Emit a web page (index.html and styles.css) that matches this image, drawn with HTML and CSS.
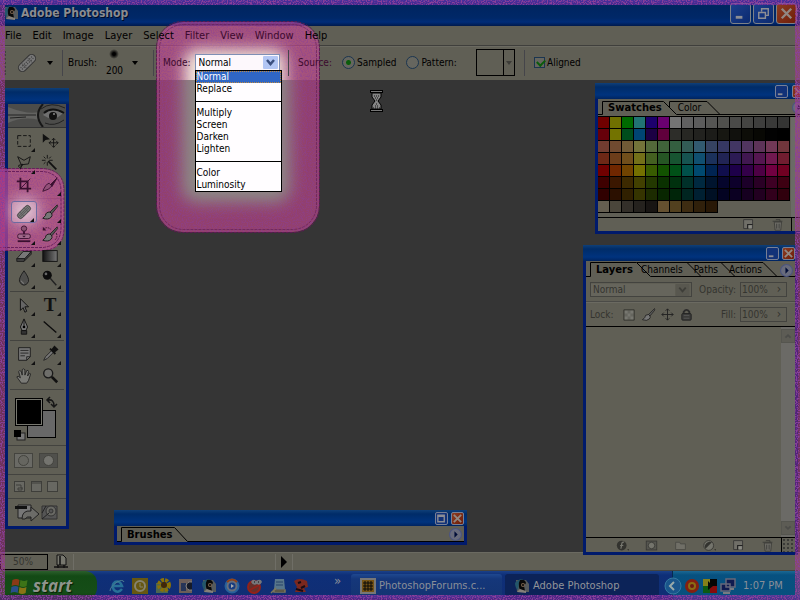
FILE: index.html
```
<!DOCTYPE html>
<html lang="en">
<head>
<meta charset="utf-8">
<title>Adobe Photoshop</title>
<link rel="stylesheet" href="styles.css">
</head>
<body>
<svg class="defs" aria-hidden="true">
  <defs>
    <filter id="grain" x="0" y="0" width="100%" height="100%">
      <feTurbulence type="fractalNoise" baseFrequency="0.8" numOctaves="2" seed="4" result="n"/>
      <feColorMatrix in="n" type="matrix" values="0 0 0 0 0.25  0 0 0 0 0.05  0 0 0 0 0.32  5 0 0 0 -2.2" result="c"/>
      <feComposite in="c" in2="SourceGraphic" operator="in"/>
    </filter>
    <filter id="soft" x="-50%" y="-50%" width="200%" height="200%"><feGaussianBlur stdDeviation="8"/></filter>
    <symbol id="eye" viewBox="0 0 16 16"><path d="M2 2h10l3 4v8H3z" fill="#565a5c"/><path d="M1 5q3-4 8-4l-4 5-1 6q-3-2-3-7z" fill="#23566a"/><path d="M6 2q5-1 6 3l-2 3 1 5q-5 1-6-4-1-4 1-7z" fill="#080808"/><circle cx="9" cy="7" r="2" fill="#79634f"/><circle cx="9" cy="7" r="1" fill="#050505"/><path d="M3 14l3-3 6 2v2z" fill="#85807a"/></symbol>
    <symbol id="bandage" viewBox="0 0 24 24"><g transform="rotate(-45 12 12)"><rect x="1.500" y="8" width="21" height="8" rx="4" fill="#777" stroke="#333"/><path d="M8 8v8M16 8v8" stroke="#444" stroke-width=".7"/><path d="M4 11h16M4 13h16" stroke="#333" stroke-dasharray="1 1.500"/></g></symbol>
    <symbol id="brush" viewBox="0 0 20 20"><path d="M18 2 10 10l2 2 6.500-8z" fill="#555" stroke="#161616" stroke-width=".8"/><path d="M10 10q-5 0-5 4l-3 3q6 2 9-1 2-2 1-4z" fill="#777" stroke="#161616"/></symbol>
    <symbol id="page" viewBox="0 0 16 16"><path d="M2 2h11v11H2z" fill="#706f68" stroke="#333"/><path d="M7 13V8h6" fill="none" stroke="#222" stroke-width="1.500"/><path d="M8 9h4v4H8z" fill="#8a8a84"/></symbol>
    <symbol id="trash" viewBox="0 0 16 16"><path d="M4 5h9l-1 10H5z" fill="#6b6a64" stroke="#3b3b38"/><path d="M2 4h12M6 2h5v2M7 7v6M10 7v6" fill="none" stroke="#383835"/></symbol>
    <symbol id="min" viewBox="0 0 12 12"><path d="M2 9h5" stroke="#8c8d94" stroke-width="2"/></symbol>
    <symbol id="close" viewBox="0 0 12 12"><path d="M2 2l8 8M10 2l-8 8" stroke="#918782" stroke-width="2"/></symbol>
    <symbol id="play" viewBox="0 0 12 12"><circle cx="6" cy="6" r="5.500" fill="#686b7c" stroke="#4b5480"/><path d="M5 3l3 3-3 3z" fill="#000d38"/></symbol>
  </defs>
</svg>

<header class="titlebar">
  <svg class="i16"><use href="#eye"/></svg>
  <h1>Adobe Photoshop</h1>
  <button class="cap" aria-label="Minimize"><svg viewBox="0 0 20 20"><path d="M5 14h7" stroke="#8c8d94" stroke-width="3"/></svg></button>
  <button class="cap" aria-label="Restore"><svg viewBox="0 0 20 20"><path d="M8 8V5h7v7h-3M5 9h7v6H5zM5 9h7" fill="none" stroke="#8c8d94" stroke-width="1.500"/></svg></button>
  <button class="cap red" aria-label="Close"><svg viewBox="0 0 20 20"><path d="M5 5l10 10M15 5L5 15" stroke="#918782" stroke-width="2.500"/></svg></button>
</header>
<nav class="menubar">
  <a href="#">File</a><a href="#">Edit</a><a href="#">Image</a><a href="#">Layer</a><a href="#">Select</a><a href="#" class="lit">Filter</a><a href="#" class="lit">View</a><a href="#" class="lit">Window</a><a href="#">Help</a>
</nav>
<section class="options">
  <div class="cell tool"><i class="grip"></i><svg class="i24"><use href="#bandage"/></svg><i class="caret"></i></div>
  <div class="cell brushcell"><span>Brush:</span><span class="tip"><i class="dot"></i>200</span><i class="caret"></i></div>
  <div class="cell modecell"><label for="mode" class="lit">Mode:</label>
    <div class="combo">
      <select id="mode"><option>Normal</option></select>
      <svg class="chev" viewBox="0 0 15 13"><rect width="15" height="13" rx="1" fill="#b3c6f4"/><path d="M4 4l3.500 4L11 4" fill="none" stroke="#3c5080" stroke-width="2.500"/></svg>
      <ul class="list" role="listbox" aria-label="Mode">
        <li role="option" class="on" aria-selected="true">Normal</li><li role="option">Replace</li><li class="rule" role="separator"></li><li role="option">Multiply</li><li role="option">Screen</li><li role="option">Darken</li><li role="option">Lighten</li><li class="rule" role="separator"></li><li role="option">Color</li><li role="option">Luminosity</li>
      </ul>
    </div>
  </div>
  <div class="cell source"><span class="lit">Source:</span><label><input type="radio" name="src" checked>Sampled</label><label><input type="radio" name="src">Pattern:</label><button class="pattern" aria-label="Pattern picker"><i class="caret"></i></button></div>
  <div class="cell"><label><input type="checkbox" checked>Aligned</label></div>
</section>

<main class="desk">
  <svg class="wait" viewBox="0 0 13 22"><path d="M0 1.500h13M0 20.500h13" stroke="#000" stroke-width="3"/><path d="M1 1.500h11M1 20.500h11" stroke="#777"/><path d="M2 3h9v4l-3 4 3 4v4H2v-4l3-4-3-4z" fill="#858585" stroke="#000"/><path d="M4 6h5M5 8h3M6 10h1M6 14h1M5 16h3M3 18h7" stroke="#111" stroke-dasharray="1 1"/></svg>

  <section class="win toolbox" aria-label="Tools">
    <div class="wt"></div>
    <svg class="banner" viewBox="0 0 58 23" preserveAspectRatio="none"><rect width="58" height="23" fill="#4c4c4a"/><path d="M0 3q20 8 31 5v8Q15 12 0 19z" fill="#626260"/><path d="M0 11h28M2 14l16-1" stroke="#222" fill="none"/><path d="M35 0q-10 11 0 23" stroke="#171717" fill="none" stroke-width="2"/><path d="M35 11q8-9 20-2-9 10-20 2z" fill="#707070"/><path d="M36 9q8-7 20 0" stroke="#111" stroke-width="2" fill="none"/><circle cx="45" cy="12" r="4" fill="#101010"/><circle cx="46" cy="10" r="1" fill="#888"/><path d="M33 5q10-8 24-1M37 19q9 4 19-3" stroke="#222" fill="none"/></svg>
    <div class="tools">
      <button aria-label="Marquee"><svg viewBox="0 0 20 20"><rect x="3" y="4" width="14" height="12" fill="none" stroke="#111" stroke-dasharray="4 2"/></svg></button>
      <button class="solo" aria-label="Move"><svg viewBox="0 0 20 20"><path d="M2 2v10l3-3 5-1z" fill="#111"/><path d="M14 7v10M9 12h10M12 9l2-2 2 2M12 15l2 2 2-2M11 10l-2 2 2 2M17 10l2 2-2 2" fill="none" stroke="#111"/></svg></button>
      <button aria-label="Lasso"><svg viewBox="0 0 20 20"><path d="M7 12L3 3l7 4 7-4-2 8-8 1q-4 0-3 2t3 0 1-3l-2 6" fill="none" stroke="#111"/></svg></button>
      <button class="solo" aria-label="Magic wand"><svg viewBox="0 0 20 20"><path d="M8 8l9 9" stroke="#111" stroke-width="2"/><path d="M7 1v4M7 9v4M1 7h4M9 7h4M3 3l2 2M11 3L9 5M3 11l2-2" stroke="#111"/></svg></button>
      <button class="solo" aria-label="Crop"><svg viewBox="0 0 20 20"><path d="M6 2v12h12M2 6h12v12" fill="none" stroke="#3a1030" stroke-width="2"/><path d="M5 15L17 3" stroke="#3a1030"/></svg></button>
      <button aria-label="Slice"><svg viewBox="0 0 20 20"><path d="M18 2l-8 8 2 2z" fill="#3a1030" stroke="#3a1030"/><path d="M2 17Q5 9 9 8l3 3q-2 4-10 6z" fill="#925078" stroke="#3a1030"/></svg></button>
    </div>
    <div class="tools">
      <button class="active" aria-label="Healing brush"><svg viewBox="0 0 24 24"><use href="#bandage"/></svg></button>
      <button aria-label="Brush"><svg><use href="#brush"/></svg></button>
      <button aria-label="Clone stamp"><svg viewBox="0 0 20 20"><circle cx="10" cy="4" r="3" fill="#8a5273" stroke="#3a1030"/><path d="M9 7h2v4H9z" fill="#3a1030"/><rect x="3" y="10" width="14" height="5" rx="2" fill="#a0688a" stroke="#3a1030"/><path d="M8 12h4l-2 2z" fill="#3a1030"/><path d="M3 18h14" stroke="#3a1030" stroke-width="2"/></svg></button>
      <button aria-label="History brush"><svg viewBox="0 0 20 20"><use href="#brush"/><path d="M2 5q5-4 9 0M17 9q2 5-2 8" fill="none" stroke="#3a1030" stroke-dasharray="2 1"/><path d="M2 2v4h4z" fill="#3a1030"/></svg></button>
      <button aria-label="Eraser"><svg viewBox="0 0 20 20"><path d="M2 13l7-8h9l-7 8z" fill="#777" stroke="#1a1a1a"/><path d="M2 13v3h8l8-8V5l-7 8H2M11 13l-1 3" fill="#444" stroke="#1a1a1a"/></svg></button>
      <button aria-label="Gradient"><svg viewBox="0 0 20 20"><linearGradient id="gr"><stop stop-color="#111"/><stop offset="1" stop-color="#777"/></linearGradient><rect x="2" y="4" width="16" height="12" fill="url(#gr)" stroke="#111"/></svg></button>
      <button aria-label="Blur"><svg viewBox="0 0 20 20"><path d="M10 2q6 8 5 12-2 4-5 4t-5-4q-1-4 5-12z" fill="#4e4e4c" stroke="#1b1b1b"/><path d="M7 13q1 3 3 3" stroke="#888" fill="none"/></svg></button>
      <button aria-label="Dodge"><svg viewBox="0 0 20 20"><circle cx="7" cy="7" r="5" fill="#0c0c0c"/><circle cx="5.500" cy="5.500" r="1.500" fill="#666"/><path d="M10 10l7 8" stroke="#222" stroke-width="1.500"/></svg></button>
    </div>
    <div class="tools">
      <button aria-label="Path selection"><svg viewBox="0 0 20 20"><path d="M6 3v13l3-3 2 5 2-1-2-5h4z" fill="#666" stroke="#0c0c0c"/></svg></button>
      <button aria-label="Type" class="type">T</button>
      <button aria-label="Pen"><svg viewBox="0 0 20 20"><path d="M10 1l4 9-2 4H8l-2-4z" fill="#777" stroke="#111"/><path d="M10 2v8M7 14h6v4H7z" stroke="#111" fill="#333"/><circle cx="10" cy="10" r="1.500"/></svg></button>
      <button aria-label="Line"><svg viewBox="0 0 20 20"><path d="M3 4l14 12" stroke="#0c0c0c" stroke-width="1.500"/></svg></button>
    </div>
    <div class="tools">
      <button aria-label="Notes"><svg viewBox="0 0 20 20"><path d="M4 3h13v10l-4 4H4z" fill="#777" stroke="#1b1b1b"/><path d="M6 6h9M6 9h9M6 12h5M13 17v-4h4" fill="none" stroke="#222"/></svg></button>
      <button aria-label="Eyedropper"><svg viewBox="0 0 20 20"><path d="M3 17l2-4 7-7 2 2-7 7z" fill="#777" stroke="#222"/><path d="M10 4l6 6M12 6l3-4 3 3-4 3z" fill="#111" stroke="#111" stroke-width="2"/></svg></button>
      <button class="solo" aria-label="Hand"><svg viewBox="0 0 20 20"><path d="M7 18l-5-7q1-2 4 1L4 5q1-2 3 0l1 4V3q1-2 3 0v6l2-5q2-1 2 1l-1 5 2-3q2 0 1 2l-2 6-2 3z" fill="#7a7a76" stroke="#222"/></svg></button>
      <button class="solo" aria-label="Zoom"><svg viewBox="0 0 20 20"><circle cx="8" cy="7" r="5" fill="#6e6e6a" stroke="#1a1a1a" stroke-width="1.500"/><path d="M12 11l6 6" stroke="#111" stroke-width="3"/></svg></button>
    </div>
    <svg class="colors" viewBox="0 0 58 55"><rect x="19.500" y="20.500" width="28" height="27" fill="#686868" stroke="#000"/><rect x="7" y="8" width="28" height="28" fill="#000"/><rect x="8.500" y="9.500" width="25" height="25" fill="#000" stroke="#77776f"/><rect x="9" y="43" width="8" height="7" fill="#777" stroke="#222"/><rect x="6" y="40" width="7" height="7" fill="#000"/><path d="M40 10q6-1 6 6M42 7l-3 3 3 3M43 14l3 3 3-3" fill="none" stroke="#171717" stroke-width="1.500"/></svg>
    <svg class="mask" viewBox="0 0 58 28"><g stroke="#44443f"><rect x="6.500" y="7.500" width="18" height="14" fill="#6a6a65"/><circle cx="15.500" cy="14.500" r="5" fill="#666660"/><rect x="31.500" y="7.500" width="18" height="14" fill="#50504c"/><circle cx="40.500" cy="14.500" r="5" fill="#74746f"/></g></svg>
    <svg class="screen" viewBox="0 0 58 23"><g stroke="#3e3e3a" fill="#686862"><rect x="6.500" y="6.500" width="10" height="10"/><rect x="23.500" y="6.500" width="10" height="10"/><rect x="39.500" y="6.500" width="10" height="10"/><path d="M8 10h5v3h2M10 13h4v2h-4zM24 8h9" fill="none"/></g></svg>
    <svg class="jump" viewBox="0 0 58 27"><path d="M10 6h13v13H10z" fill="#777" stroke="#222"/><path d="M7 7h12v3H7z" fill="#111"/><path d="M14 20q0-9 9-8V8l8 7-8 7v-4q-4-1-6 2z" fill="#6c6c68" stroke="#222"/><path d="M34 7h15v13H34z" fill="#555" stroke="#333"/><circle cx="43" cy="12" r="5" fill="#696964" stroke="#333"/><circle cx="43" cy="12" r="2" fill="#555" stroke="#333"/><path d="M34 20l7-6M38 7l-4 7" stroke="#222"/></svg>
  </section>

  <section class="win swatches" aria-label="Swatches">
    <div class="wt"><button class="wb" aria-label="Minimize"><svg><use href="#min"/></svg></button><button class="wb red" aria-label="Close"><svg><use href="#close"/></svg></button></div>
    <div class="tabs"><svg class="edge" viewBox="0 0 207 18" preserveAspectRatio="xMinYMin slice"><path d="M0 15.500h4.500V2.500h61l13 13H207M71.500 8V2.500H109l13 13" fill="none" stroke="#000"/></svg><b>Swatches</b><span>Color</span><svg class="play"><use href="#play"/></svg></div>
    <div class="swbody"><div class="grid" id="grid"></div><div class="bar"></div></div>
    <div class="wfoot"><svg class="i16"><use href="#page"/></svg><svg class="i16"><use href="#trash"/></svg><i></i></div>
  </section>

  <section class="win layers" aria-label="Layers">
    <div class="wt"><button class="wb" aria-label="Minimize"><svg><use href="#min"/></svg></button><button class="wb red" aria-label="Close"><svg><use href="#close"/></svg></button></div>
    <div class="tabs"><svg class="edge" viewBox="0 0 209 18" preserveAspectRatio="xMinYMin slice"><path d="M0 15.500h4.500V1.500h46l14 14H209M51 1.500h50l14 14M101 1.500h34l14 14M135 1.500h42l14 14" fill="none" stroke="#000"/></svg><b>Layers</b><span>Channels</span><span>Paths</span><span>Actions</span><svg class="play"><use href="#play"/></svg></div>
    <div class="row dim"><div class="blendbox"><select class="blend" aria-label="Blend mode" disabled><option>Normal</option></select><svg viewBox="0 0 15 13"><rect width="15" height="13" rx="1" fill="#58574f"/><path d="M4 4l3.500 4L11 4" fill="none" stroke="#3e3e39" stroke-width="2"/></svg></div><label class="end" for="op">Opacity:</label><input id="op" class="pct" value="100%" disabled><i class="step">›</i></div>
    <div class="row dim second"><span>Lock:</span><svg class="i16 first" viewBox="0 0 16 16"><path d="M2 3h11v11H2z" fill="#66665f" stroke="#33332f"/><path d="M3 4h3v3H3zM9 4h3v3H9zM6 7h3v3H6zM3 10h3v3H3zM9 10h3v3H9z" fill="#777770"/></svg><svg class="i16"><use href="#brush"/></svg><svg class="i16" viewBox="0 0 16 16"><path d="M8 2v12M2 8h12M6 4l2-2 2 2M6 12l2 2 2-2M4 6L2 8l2 2M12 6l2 2-2 2" fill="none" stroke="#222"/></svg><svg class="i16" viewBox="0 0 16 16"><path d="M5 8V5q3-4 6 0v3" fill="none" stroke="#2b2b2b" stroke-width="2"/><rect x="3" y="7" width="10" height="7" rx="1" fill="#3b3b39" stroke="#222"/><path d="M5 9h6M5 12h6" stroke="#555"/></svg><label class="end" for="fill">Fill:</label><input id="fill" class="pct" value="100%" disabled><i class="step">›</i></div>
    <div class="lbody"><div class="scroll"><svg viewBox="0 0 14 14"><path d="M4 9l3-3 3 3" fill="none" stroke="#4c4c49" stroke-width="2"/></svg><svg viewBox="0 0 14 14"><path d="M4 5l3 3 3-3" fill="none" stroke="#4c4c49" stroke-width="2"/></svg></div></div>
    <div class="wfoot lfoot">
      <svg class="i16" viewBox="0 0 16 16"><circle cx="7" cy="8" r="6" fill="#33332f"/><path d="M10 4q-3-1-3 3l-1 5M5 8h4" fill="none" stroke="#77776f" stroke-width="1.500"/><path d="M14 13h2l-1 1z"/></svg>
      <svg class="i16" viewBox="0 0 16 16"><rect x="1.500" y="2.500" width="13" height="11" fill="#55554f" stroke="#363633"/><circle cx="8" cy="8" r="4" fill="#74746c" stroke="#363633"/></svg>
      <svg class="i16" viewBox="0 0 16 16"><path d="M2 4h5l1 2h6v7H2z" fill="#706f67" stroke="#484842"/></svg>
      <svg class="i16" viewBox="0 0 16 16"><circle cx="7" cy="8" r="6" fill="#74746c" stroke="#33332f"/><path d="M3 12a6 6 0 0 1 8-8z" fill="#33332f"/><path d="M14 13h2l-1 1z"/></svg>
      <svg class="i16"><use href="#page"/></svg><svg class="i16"><use href="#trash"/></svg><i></i>
    </div>
  </section>

  <section class="win brushes" aria-label="Brushes">
    <div class="wt"><button class="wb" aria-label="Maximize"><svg viewBox="0 0 12 12"><path d="M2 2.500h7v7H2zM2 3.500h7" fill="none" stroke="#8c8d94" stroke-width="1.500"/></svg></button><button class="wb red" aria-label="Close"><svg><use href="#close"/></svg></button></div>
    <div class="tabs"><svg class="edge" viewBox="0 0 347 18" preserveAspectRatio="xMinYMin slice"><path d="M0 15.500h4.500V1.500h53l13 14H347" fill="none" stroke="#000"/></svg><b>Brushes</b><svg class="play"><use href="#play"/></svg></div>
  </section>
</main>

<footer class="status"><input class="zoom" value="50%" aria-label="Zoom"><svg class="i16" viewBox="0 0 16 16"><path d="M4 1h6l3 3v7H4z" fill="#77776e" stroke="#111"/><path d="M7 2v9M1 13h14M5 11v3M11 11v3" stroke="#111" stroke-width="1.500"/></svg><span class="info"></span><button class="go" aria-label="Status menu"></button></footer>

<footer class="taskbar">
  <button class="start"><svg viewBox="0 0 20 20"><g transform="skewX(-8)"><path d="M4 4q4-2 7 0v6q-3-2-7 0z" fill="#8a3a18"/><path d="M12 4q4 2 7 0v6q-3 2-7 0z" fill="#3d7417"/><path d="M4 11q4-2 7 0v6q-3-2-7 0z" fill="#294f8c"/><path d="M12 11q4 2 7 0v6q-3 2-7 0z" fill="#8a7415"/></g></svg>start</button>
  <div class="quick">
    <svg viewBox="0 0 16 16"><path d="M13 11q-4 5-8 1-3-5 1-8 5-2 7 4H5" fill="none" stroke="#287097" stroke-width="2.500"/><path d="M1 13q0-4 7-9 6-3 7 0" fill="none" stroke="#4b7d91"/></svg>
    <svg viewBox="0 0 16 16"><rect width="16" height="16" fill="#665711"/><circle cx="8" cy="8" r="5" fill="none" stroke="#85836f" stroke-width="2"/><path d="M8 5v4h3" fill="none" stroke="#85836f"/></svg>
    <svg viewBox="0 0 16 16"><path d="M1 5h12v10H1z" fill="#4d6651"/><circle cx="9" cy="7" r="5" fill="none" stroke="#8a7207" stroke-width="4" stroke-dasharray="3 1"/><circle cx="9" cy="7" r="3" fill="#422807"/></svg>
    <svg viewBox="0 0 16 16"><path d="M1 1h13v14H1z" fill="#6b5d58"/><path d="M3 5h5v8H3z" fill="#253458"/><path d="M14 4q-5-1-6 4 1 5 6 4" fill="#151a28" stroke="#8a8784"/></svg>
    <svg><use href="#eye"/></svg>
    <svg viewBox="0 0 16 16"><circle cx="8" cy="8" r="6.500" fill="#696e7a" stroke="#28609a" stroke-width="2"/><path d="M3 4q5-5 10 0" stroke="#954014" fill="none" stroke-width="2"/><circle cx="8" cy="8" r="3.500" fill="#183c80"/><path d="M7 6l3 2-3 2z" fill="#aaa"/></svg>
    <svg viewBox="0 0 16 16"><circle cx="7" cy="9" r="6" fill="#65302a" stroke="#922219" stroke-width="2"/><path d="M3 12l9-5" stroke="#922219" stroke-width="2"/><path d="M4 4q2-4 5-1 5-3 6 1-2 4-5 2-4 2-6-2z" fill="#76777a"/><path d="M7 4h1M11 4h1" stroke="#111"/></svg>
    <svg viewBox="0 0 16 16"><path d="M5 1h9l1 10H4z" fill="#58758a"/><path d="M6 4h7M6 7h7" stroke="#264368"/><path d="M1 15l5-5M4 12h11v2H4z" stroke="#7b755d" stroke-width="1.500"/></svg>
    <svg viewBox="0 0 16 16"><path d="M1 3q5-4 13 0l1 6-4 1 2 4H2l2-5z" fill="#7b281e"/><path d="M5 5l3-1M8 10l4-2M3 11l7 2" stroke="#170b14" stroke-width="2"/></svg>
  </div>
  <span class="more">»</span>
  <button class="task"><svg viewBox="0 0 16 16"><rect x="1" y="1" width="14" height="14" fill="#765315" stroke="#777" stroke-width="2"/><path d="M5 3v10M8 3v10M11 3v10M3 5h10M3 8h10M3 11h10" stroke="#0a0a0a"/></svg><span>PhotoshopForums.c...</span></button>
  <button class="task down"><svg><use href="#eye"/></svg><span>Adobe Photoshop</span></button>
  <div class="tray"><svg class="i18" viewBox="0 0 18 18"><circle cx="9" cy="9" r="8" fill="#19558b" stroke="#3479a0"/><path d="M10 5L6 9l4 4" fill="none" stroke="#9aa" stroke-width="2"/></svg>
    <svg viewBox="0 0 16 16"><circle cx="8" cy="8" r="7" fill="#852010"/><circle cx="8" cy="8" r="4" fill="#8a6c14"/><circle cx="8" cy="8" r="2" fill="#6c1b10"/></svg>
    <svg viewBox="0 0 16 16"><path d="M1 1h7v7H1z" fill="#85801a"/><path d="M8 1h7v7H8z" fill="#050505"/><path d="M1 8h7v7H1z" fill="#0c5a13"/><path d="M8 8h7v7H8z" fill="#870b0b"/><path d="M6 3l5 5-5 4z" fill="#080808"/></svg>
    <svg viewBox="0 0 16 16"><path d="M6 1h9v8H6zM1 6h9v7H1z" fill="#101b50" stroke="#65687a" stroke-width="1.500"/><path d="M3 15h7M10 11h4" stroke="#777a82" stroke-width="2"/></svg>
    <time>1:07 PM</time></div>
</footer>

<svg class="spot modespot" viewBox="0 0 166 214" aria-hidden="true">
  <clipPath id="bars"><rect width="166" height="60"/></clipPath><clipPath id="below"><rect y="60" width="166" height="154"/></clipPath>
  <rect x="2" y="2" width="162" height="210" rx="26" fill="#de4a9a" fill-opacity=".56"/>
  <rect x="2" y="2" width="162" height="210" rx="26" fill="#fff" filter="url(#grain)" opacity=".45"/>
  <g fill="none" stroke="#5d1a52" stroke-dasharray="3 1"><rect x="1.500" y="1.500" width="163" height="211" rx="26"/><rect x="4.500" y="4.500" width="157" height="205" rx="24" stroke-opacity=".6"/></g>
  <rect x="27" y="28" width="108" height="154" rx="14" fill="#8c8985" filter="url(#soft)" clip-path="url(#below)"/>
  <rect x="30" y="30" width="100" height="80" rx="10" fill="#f4ecde" filter="url(#soft)" clip-path="url(#bars)"/>
</svg>
<svg class="spot toolspot" viewBox="0 0 68 86" aria-hidden="true">
  <path d="M0 2h44q20 2 20 22v38q0 20-20 22H0z" fill="#e0529f" fill-opacity=".6"/>
  <path d="M0 2h44q20 2 20 22v38q0 20-20 22H0z" fill="#fff" filter="url(#grain)" opacity=".35"/>
  <path d="M0 1.500h44q20 2 20 22v38q0 20-20 22H0M0 4.500h43q18 2 18 20v36q0 18-18 20H0" fill="none" stroke="#6a1f5c" stroke-dasharray="3 1"/>
  <rect x="12" y="32" width="26" height="24" rx="8" fill="#ead7e2" filter="url(#soft)" opacity=".8"/>
</svg>
<div class="frame" aria-hidden="true"><svg class="t"><rect width="100%" height="100%" filter="url(#grain)"/></svg><svg class="b"><rect width="100%" height="100%" filter="url(#grain)"/></svg><svg class="l"><rect width="100%" height="100%" filter="url(#grain)"/></svg><svg class="r"><rect width="100%" height="100%" filter="url(#grain)"/></svg></div>
<script src="swatches.js"></script>
</body>
</html>
```
FILE: styles.css
```
* { box-sizing: border-box; }
body {
  margin: 0; height: 100vh; display: flex; flex-direction: column; overflow: hidden; position: relative;
  background: #353535; color: #000;
  font: 10px/12px "DejaVu Sans Condensed", "DejaVu Sans", sans-serif;
}
button, input, select { font: inherit; color: inherit; margin: 0; padding: 0; border: 0; background: none; border-radius: 0; }
svg { display: block; flex: none; }
.defs { position: absolute; width: 0; height: 0; }
.i16 { width: 16px; height: 16px; }
.i18 { width: 18px; height: 18px; }
.i24 { width: 24px; height: 24px; }
a { color: inherit; text-decoration: none; }
.lit { color: #3c0a2e; }

.titlebar {
  flex: none; height: 26px; padding: 0 3px; display: flex; align-items: center; gap: 2px;
  background: linear-gradient(#003a88, #002560 6px, #002868 18px, #002c78 22px, #001a4c);
}
.titlebar h1 { flex: 1; margin: 0; font: bold 12px/16px "DejaVu Sans Condensed", sans-serif; color: #8b8c90; text-shadow: 1px 1px #000c28; }
.cap { width: 21px; height: 21px; border: 1px solid #7d8188; border-radius: 3px; background: linear-gradient(135deg, #1c3f8c, #0b2a70); }
.cap svg { width: 19px; height: 19px; }
.cap.red, .wb.red { background: linear-gradient(135deg, #8c3c22, #6e1d08); }

.menubar {
  flex: none; height: 20px; padding: 0 5px; display: flex; align-items: center; gap: 11px; font-size: 11px;
  background: #605f55; border-bottom: 1px solid #3f3f3c;
}
.menubar a { position: relative; z-index: 3; }
.options { flex: none; height: 34px; padding-bottom: 2px; display: flex; align-items: center; background: #605f55; border-top: 1px solid #6b6a61; }
.cell { position: relative; z-index: 3; height: 26px; display: flex; align-items: center; padding: 0 9px; border-left: 1px solid #45454a; }
.cell.tool { border: 0; width: 62px; padding: 0 0 0 4px; gap: 9px; }
.cell.tool .caret { margin-left: -1px; }
.grip { width: 2px; height: 24px; border-left: 2px dotted #43433e; }
.caret { border: 3px solid transparent; border-top: 4px solid #000; border-bottom: 0; }
.brushcell { width: 91px; justify-content: space-between; padding: 0 15px 0 5px; }
.tip { height: 28px; display: flex; flex-direction: column; align-items: center; justify-content: space-between; }
.dot { width: 10px; height: 10px; border-radius: 50%; background: radial-gradient(#000 20%, transparent 70%); }
.modecell { gap: 4px; z-index: 4; width: 135px; justify-content: flex-end; padding-right: 8px; }
.combo { position: relative; width: 87px; height: 17px; }
#mode { width: 100%; height: 100%; appearance: none; padding-left: 3px; background: #fdf8fc; border: 1px solid #7f8fb5; color: #000; }
.chev { position: absolute; right: 2px; top: 2px; width: 15px; height: 13px; pointer-events: none; }
.list { position: absolute; top: 16px; left: 0; width: 87px; margin: 0; padding: 0; list-style: none; background: #fffdff; border: 1px solid #000; }
.list li { height: 12px; line-height: 12px; padding-left: 1px; }
.list .on { background: #2f66c4; color: #fff; outline: 1px dotted #c08a40; outline-offset: -1px; }
.list .rule { background: linear-gradient(#000, #000) 0 6px / 100% 1px no-repeat; }
.source { width: 236px; gap: 10px; }
.source .pattern { margin-left: auto; }
label { display: flex; align-items: center; gap: 2px; }
input[type=radio], input[type=checkbox] { appearance: none; position: relative; width: 13px; height: 13px; border: 1px solid #1b3550; background: #66665f; }
input[type=radio] { border-radius: 50%; }
input[type=radio]:checked { background: radial-gradient(circle, #0b5c0b 2px, #66665f 3px); }
input[type=checkbox] { width: 11px; height: 11px; }
input[type=checkbox]:checked::after { content: ""; position: absolute; left: 2px; top: 1px; width: 6px; height: 4px; border: solid #0b5c0b; border-width: 0 0 2px 2px; transform: rotate(-45deg); }
.pattern { width: 39px; height: 27px; border: 1px solid #000; display: flex; align-items: center; justify-content: flex-end; padding-right: 2px; background: linear-gradient(#000, #000) 26px 0 / 1px 100% no-repeat; }
.pattern .caret { border-top-color: #3c3c38; }

.desk { flex: 1; position: relative; min-height: 0; }
.wait { position: absolute; left: 370px; top: 10px; width: 13px; height: 22px; }
.win { position: absolute; display: flex; flex-direction: column; background: #605f55; border: solid #001a6c; border-width: 0 3px 3px; }
.wt { flex: none; height: 16px; margin: 0 -3px; padding: 2px 3px 0; display: flex; justify-content: flex-end; gap: 3px; background: linear-gradient(#0f3f78, #002c68 4px, #00337e 12px, #002460); }
.wb { width: 13px; height: 13px; border: 1px solid #777f95; border-radius: 2px; background: #123278; }
.wb svg { width: 11px; height: 11px; }
.tabs { flex: none; height: 18px; position: relative; display: flex; align-items: center; padding: 1px 2px 0 10px; }
.tabs > span, .tabs > b { position: relative; line-height: 14px; }
.tabs b { font-size: 10px; font-family: "DejaVu Sans", sans-serif; }
.edge { position: absolute; left: 0; top: 0; width: 100%; height: 18px; }
.play { position: relative; width: 13px; height: 13px; margin-left: auto; }

.toolbox { left: 5px; top: 8px; width: 64px; }
.banner { width: 100%; height: 24px; border-bottom: 1px solid #333; }
.tools { display: grid; grid-template-columns: 26px 26px; justify-content: center; padding: 2px 0; border-bottom: 1px solid #43433f; margin: 0 2px; }
.tools button { position: relative; z-index: 3; height: 22px; display: flex; align-items: center; justify-content: center; }
.tools svg { width: 18px; height: 18px; }
.tools button::after { content: ""; position: absolute; right: 2px; bottom: 0; border-left: 4px solid transparent; border-bottom: 4px solid #111; }
.tools .solo::after { display: none; }
.tools .active { border: 1px solid #6d6ba0; border-radius: 3px; background: rgba(255, 255, 255, .2); }
.tools .type { font: bold 19px/20px "Liberation Serif", serif; color: #111; }
.colors, .mask, .screen, .jump { width: 58px; }
.colors { height: 55px; }
.mask { height: 29px; border-top: 1px solid #43433f; }
.screen { height: 24px; border-top: 1px solid #43433f; }
.jump { height: 28px; border-top: 1px solid #43433f; }

.swatches { right: -8px; top: 3px; width: 213px; }
.swatches .wt { gap: 4px; }
.swatches .tabs { height: 17px; padding-top: 0; }
.swatches .tabs span { margin-left: 16px; }
.swatches .play { margin-right: -2px; }
.swbody { height: 101px; display: flex; justify-content: space-between; border-top: 1px solid #000; }
.grid { display: grid; grid-template-columns: repeat(16, 12px); grid-auto-rows: 12px; align-content: start; }
.grid button { border: solid #000; border-width: 0 1px 1px 0; }
.bar { width: 14px; background: #6b6a66; }
.wfoot { height: 14px; border-top: 1px solid #000; display: flex; align-items: center; justify-content: flex-end; gap: 16px; }
.wfoot i { width: 14px; align-self: stretch; border-left: 1px solid #000; margin-left: -9px; }
.wfoot .i16 { width: 13px; height: 13px; }

.layers { right: 2px; top: 165px; width: 215px; height: 310px; }
.layers .tabs { gap: 11px; height: 17px; }
.layers .tabs b { margin-right: -3px; }
.row { height: 24px; display: flex; align-items: center; gap: 4px; padding: 0 8px 0 4px; border-bottom: 1px solid #4b4b47; }
.dim { color: #34342f; }
.second { height: 25px; border-top: 1px solid #6b6a61; border-bottom-color: #000; }
.second .i16 { width: 15px; height: 15px; }
.second .first { margin-left: 4px; }
.second .end { margin-left: auto; }
.blendbox { width: 102px; height: 15px; padding-right: 1px; display: flex; align-items: center; border: 1px solid #43433f; }
.blendbox svg { width: 15px; height: 12px; }
.blend { appearance: none; flex: 1; padding-left: 2px; opacity: 1; color: #34342f; background: #66655c; }
.end { margin-left: auto; }
.pct { width: 32px; height: 15px; border: 1px solid #43433f; border-right: 0; padding-left: 1px; color: #34342f; }
.step { width: 15px; height: 15px; margin-left: -4px; border: 1px solid #43433f; border-left: 0; text-align: center; font-style: normal; font-size: 12px; }
.lbody { flex: 1; display: flex; justify-content: flex-end; }
.scroll { width: 14px; display: flex; flex-direction: column; justify-content: space-between; background: #6b6a66; padding: 2px 0; }
.scroll svg { width: 14px; height: 14px; background: #5d5c55; border: 1px solid #55554f; }
.lfoot { height: 15px; flex: none; }
.lfoot i { background: radial-gradient(circle, #3b3b38 1px, transparent 1px) 0 0 / 4px 4px; }

.brushes { left: 114px; right: 333px; bottom: 7px; }
.brushes .tabs { height: 16px; }

.status { flex: none; height: 19px; display: flex; align-items: center; background: #605f55; border-top: 1px solid #6b6a61; border-bottom: 1px solid #44443f; }
.zoom { width: 48px; height: 16px; border: 1px solid #000; padding-left: 12px; color: #34342f; }
.status .i16 { margin: 0 4px 0 5px; }
.info { width: 203px; height: 16px; border-left: 1px solid #6f6e66; border-right: 1px solid #6f6e66; }
.go { width: 17px; height: 16px; border-right: 1px solid #6f6e66; display: flex; align-items: center; justify-content: center; }
.go::before { content: ""; border: 6px solid transparent; border-left-color: #000; border-right: 0; }

.taskbar { flex: none; height: 29px; display: flex; align-items: center; background: linear-gradient(#1a4088, #0e2f78 4px, #102e74 24px, #0a2050); color: #8a8f98; }
.start { width: 97px; height: 29px; padding-left: 9px; display: flex; align-items: center; gap: 4px; border-radius: 0 12px 12px 0; background: linear-gradient(#2c5f2c, #134a15 5px, #154d17 22px, #0b300d); color: #8f948c; font: italic bold 17px/20px "Open Sans", sans-serif; text-shadow: 1px 1px 1px #062006; }
.start svg { width: 20px; height: 20px; }
.quick { display: flex; gap: 7px; margin-left: 12px; }
.quick svg, .task svg, .tray svg { width: 16px; height: 16px; }
.more { width: 17px; margin-left: 25px; padding-bottom: 10px; font-size: 13px; }
.task { width: 151px; height: 24px; margin-right: 3px; padding-left: 9px; display: flex; align-items: center; gap: 3px; border-radius: 3px; background: linear-gradient(#1f4890, #15377a 5px, #143472); font-size: 11px; }
.task span { white-space: nowrap; }
.task.down { background: #0c2358; width: 154px; color: #929498; }
.tray { flex: 1; min-width: 0; height: 29px; margin-left: 10px; display: flex; align-items: center; gap: 2px; font-size: 11px; background: linear-gradient(#1b6894, #075180 4px, #08507e 24px, #063a60); border-left: 1px solid #052a50; }
.tray .i18 { width: 18px; height: 18px; margin-left: -9px; }
.tray time { margin-left: 5px; white-space: nowrap; }

.spot { position: absolute; z-index: 2; pointer-events: none; }
.modespot { left: 155px; top: 20px; width: 166px; height: 214px; }
.toolspot { left: 0; top: 167px; width: 68px; height: 86px; }
.frame { position: absolute; inset: 0; z-index: 5; pointer-events: none; }
.frame svg { position: absolute; }
.t, .b { left: 0; width: 100%; height: 5px; background: rgba(140, 40, 180, .5); }
.t { top: 0; }
.b { bottom: 0; }
.l, .r { top: 5px; height: calc(100% - 10px); width: 5px; background: rgba(190, 50, 140, .42); }
.l { left: 0; }
.r { right: 0; }
```
FILE: swatches.js
```
const rows = [
  "700000 707000 006a00 217373 1c006c 6a0070 747474 606060 5c5c5c 555553 50504d 4a4a48 444442 3e3e3d 393938 343433",
  "66000a 737300 004d1c 004573 1b0043 60003c 2d2d29 272723 22221f 1c1c19 171712 11110d 0d0d08 080804 020202 000000",
  "713c30 704a30 715a36 73733a 53693a 40633a 345f40 325b55 325a70 364362 363863 423663 513560 5d3358 723856 70363c",
  "6d2816 6c3d1a 704e1b 737019 446020 265624 175431 165350 104f70 1b315b 212454 2c1b54 401750 551650 721950 701d30",
  "700000 702700 704300 747000 385b00 125200 005017 00504a 004970 002452 100e4c 1d0049 330049 4d0044 720041 700022",
  "3e0000 3b1700 3c2900 424000 233800 0a3100 00310e 003029 002940 00142e 05052c 0d002b 1c0029 2a0025 3e0024 3d0012",
  "300000 2b1000 302000 353400 1c2b00 082600 002509 002520 002032 001024 030322 0b0022 160020 220020 32001c 30000d",
  "645e50 4a463b 332f29 25221e 181513 645030 52401f 3e2c12 30200b 281806"
];
const grid = document.getElementById("grid");
rows.join(" ").split(" ").forEach(hex => {
  const b = document.createElement("button");
  b.style.backgroundColor = "#" + hex;
  b.setAttribute("aria-label", "Swatch " + hex);
  grid.append(b);
});
```
